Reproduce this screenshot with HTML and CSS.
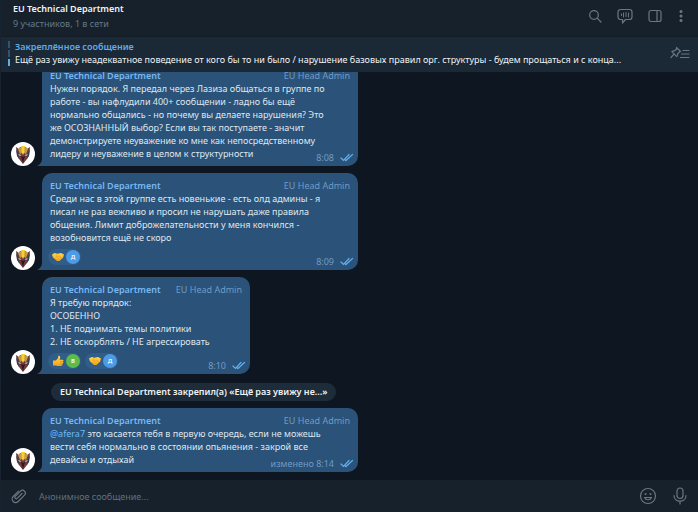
FILE: index.html
```html
<!DOCTYPE html>
<html lang="ru">
<head>
  <meta charset="UTF-8" />
  <meta name="viewport" content="width=device-width, initial-scale=1.0"/>
  <title>EU Technical Department</title>
  <link rel="stylesheet" href="styles.css">
</head>
<body>
  <!-- shared drawings -->
  <svg class="defs" aria-hidden="true">
    <defs>
      <linearGradient id="gold" x1="0" y1="0" x2="0" y2="1">
        <stop offset="0" stop-color="#ffd84a"/>
        <stop offset="1" stop-color="#f5a21c"/>
      </linearGradient>
    </defs>
    <symbol id="face" viewBox="0 0 24 24">
      <circle cx="12" cy="12" r="12" fill="#fff"/>
      <path d="M5 5l3 2 1-2h6l1 2 3-2-1 8-2 4-4 5-4-5-2-4z" fill="#6b3a40"/>
      <path d="M5 7l2 4 1 6-2-3zM19 7l-2 4-1 6 2-3z" fill="#24434a"/>
      <path d="M7 7l3-2 1 6-2 1zM14 5l3 2-2 5-2-1z" fill="#c99a44"/>
      <path d="M10 4h4l-.5 6-1.500 3-1.500-3z" fill="#f6cf35"/>
      <path d="M7 12l3 1-1 1zM17 12l-3 1 1 1z" fill="#f1e4dc"/>
      <path d="M10 14l2 1 2-1-2 7z" fill="#261c26"/>
      <path d="M8 14l2 2 1 3zM16 14l-2 2-1 3z" fill="#a32c38"/>
    </symbol>
    <symbol id="checks" viewBox="0 0 14 9">
      <path d="M1 5l2.500 2.500 5.500-6M6 7.500l6.500-6M4.800 6.300l.9 1.200" fill="none" stroke="#62b0f0" stroke-width="1.200" stroke-linecap="round"/>
    </symbol>
    <symbol id="tail" viewBox="0 0 10 10">
      <path d="M5 0v3C5 6 3 8.500 0 10h10V0z" fill="#2b5278"/>
    </symbol>
    <symbol id="handshake" viewBox="0 0 12 10">
      <path d="M0 2.500L2.500 1l3 .8L9 1l3 1.500-.8 3L7.500 9 5 9 1 5.500z" fill="url(#gold)"/>
      <path d="M5 2.200L4 4.300l1.500.5L7 3.800l3 2.500M3 6.500l1.500 1.500M6 6.500l1.500 1.500" fill="none" stroke="#d9821a" stroke-width=".4"/>
    </symbol>
    <symbol id="thumb" viewBox="0 0 12 12">
      <path d="M1 5.500h2.800L6 3.200 6.300.8C7.800.4 8.600 1.800 8.100 3.300L7.600 4.800h3c1 0 1.200 1.300.4 1.700.7.500.5 1.400-.2 1.600.4.600.1 1.400-.6 1.500.2.800-.3 1.400-1.200 1.400H5.500L3.800 10.500H1z" fill="url(#gold)"/>
      <path d="M8 6.500h3M8 8.200h2.800M7.800 9.700h2.400" stroke="#d9821a" stroke-width=".5"/>
    </symbol>
  </svg>

  <div class="app">
    <header class="topbar">
      <div class="topbar-info">
        <h1>EU Technical Department</h1>
        <p>9 участников, 1 в сети</p>
      </div>
      <div class="topbar-actions">
        <button class="icon-btn" aria-label="Поиск">
          <svg width="14" height="14" viewBox="0 0 14 14"><circle cx="6" cy="6" r="4.300"/><path d="M9.200 9.200l3.800 3.800"/></svg>
        </button>
        <button class="icon-btn" aria-label="Видеочат">
          <svg width="16" height="16" viewBox="0 0 16 16"><path d="M3.500 1.500h9a2.500 2.500 0 0 1 2.500 2.500v5a2.500 2.500 0 0 1-2.500 2.500H8.500L5.500 15v-3.500h-2A2.500 2.500 0 0 1 1 9V4a2.500 2.500 0 0 1 2.500-2.500z"/><path class="thin" d="M4.500 6v1.500M6.500 5v4M9 4.500v4M11.500 5v4"/></svg>
        </button>
        <button class="icon-btn" aria-label="Боковая панель">
          <svg width="14" height="14" viewBox="0 0 14 14"><rect x="1" y="1.500" width="12" height="11" rx="2"/><path d="M9 1.500v11"/></svg>
        </button>
        <button class="icon-btn" aria-label="Меню">
          <svg class="dots" width="8" height="14" viewBox="0 0 8 14"><circle cx="4" cy="2.500" r="1.500"/><circle cx="4" cy="7" r="1.500"/><circle cx="4" cy="11.500" r="1.500"/></svg>
        </button>
      </div>
    </header>

    <section class="pinned">
      <div class="pinned-marks"><i></i><i></i><i class="on"></i></div>
      <div class="pinned-text">
        <h2>Закреплённое сообщение</h2>
        <p>Ещё раз увижу неадекватное поведение от кого бы то ни было / нарушение базовых правил орг. структуры - будем прощаться и с конца...</p>
      </div>
      <button class="icon-btn" aria-label="Все закреплённые">
        <svg width="20" height="14" viewBox="0 0 20 14"><path d="M6.500 1.500l4 4-1 .5-2 2c.3 1.300 0 2-.7 2.700L1.800 5.700c.7-.7 1.500-1 2.700-.7l2-2zM4 8.200L1 11.500M13 4.500h6M11.500 8H19M10.500 11.500H19"/></svg>
      </button>
    </section>

    <main class="chat">
      <article class="message">
        <svg class="avatar"><use href="#face"/></svg>
        <div class="bubble">
          <svg class="tail"><use href="#tail"/></svg>
          <div class="bubble-head"><b>EU Technical Department</b><span>EU Head Admin</span></div>
          <p>Нужен порядок. Я передал через Лазиза общаться в группе по<br>работе - вы нафлудили 400+ сообщении - ладно бы ещё<br>нормально общались - но почему вы делаете нарушения? Это<br>же ОСОЗНАННЫЙ выбор? Если вы так поступаете - значит<br>демонстрируете неуважение ко мне как непосредственному<br>лидеру и неуважение в целом к структурности</p>
          <div class="meta"><time>8:08</time><svg><use href="#checks"/></svg></div>
        </div>
      </article>

      <article class="message">
        <svg class="avatar"><use href="#face"/></svg>
        <div class="bubble">
          <svg class="tail"><use href="#tail"/></svg>
          <div class="bubble-head"><b>EU Technical Department</b><span>EU Head Admin</span></div>
          <p>Среди нас в этой группе есть новенькие - есть олд админы - я<br>писал не раз вежливо и просил не нарушать даже правила<br>общения. Лимит доброжелательности у меня кончился -<br>возобновится ещё не скоро</p>
          <div class="reactions">
            <button class="reaction"><svg><use href="#handshake"/></svg><span class="who blue">Д</span></button>
          </div>
          <div class="meta"><time>8:09</time><svg><use href="#checks"/></svg></div>
        </div>
      </article>

      <article class="message">
        <svg class="avatar"><use href="#face"/></svg>
        <div class="bubble short">
          <svg class="tail"><use href="#tail"/></svg>
          <div class="bubble-head"><b>EU Technical Department</b><span>EU Head Admin</span></div>
          <p>Я требую порядок:<br>ОСОБЕННО<br>1. НЕ поднимать темы политики<br>2. НЕ оскорблять / НЕ агрессировать</p>
          <div class="reactions">
            <button class="reaction"><svg><use href="#thumb"/></svg><span class="who green">В</span></button>
            <button class="reaction"><svg><use href="#handshake"/></svg><span class="who blue">Д</span></button>
          </div>
          <div class="meta"><time>8:10</time><svg><use href="#checks"/></svg></div>
        </div>
      </article>

      <div class="service">EU Technical Department закрепил(а) «Ещё раз увижу не...»</div>

      <article class="message">
        <svg class="avatar"><use href="#face"/></svg>
        <div class="bubble">
          <svg class="tail"><use href="#tail"/></svg>
          <div class="bubble-head"><b>EU Technical Department</b><span>EU Head Admin</span></div>
          <p><a href="#afera7">@afera7</a> это касается тебя в первую очередь, если не можешь<br>вести себя нормально в состоянии опьянения - закрой все<br>девайсы и отдыхай</p>
          <div class="meta"><time>изменено 8:14</time><svg><use href="#checks"/></svg></div>
        </div>
      </article>
    </main>

    <footer class="composer">
      <button class="icon-btn" aria-label="Прикрепить">
        <svg width="16" height="16" viewBox="0 0 16 16"><path d="M11 5.500L6.200 10.300a1.300 1.300 0 0 1-1.900-1.900L9.500 3.200a2.800 2.800 0 0 1 4 4L7.200 13.500a3.400 3.400 0 0 1-5-5L7.500 3.200"/></svg>
      </button>
      <input type="text" placeholder="Анонимное сообщение..." aria-label="Анонимное сообщение">
      <button class="icon-btn" aria-label="Эмодзи">
        <svg width="18" height="18" viewBox="0 0 18 18"><circle cx="9" cy="9" r="7.500"/><path d="M5.500 10.500c1.200 3 5.800 3 7 0z"/><circle class="fill" cx="6.500" cy="7" r="1"/><circle class="fill" cx="11.500" cy="7" r="1"/></svg>
      </button>
      <button class="icon-btn" aria-label="Голосовое сообщение">
        <svg width="14" height="18" viewBox="0 0 14 18"><rect x="4" y="1" width="6" height="10.500" rx="3"/><path d="M1 8.500c0 7.500 12 7.500 12 0M7 14v3"/></svg>
      </button>
    </footer>
  </div>
</body>
</html>
```
FILE: styles.css
```css
* {
  box-sizing: border-box;
}

body {
  margin: 0;
  background: #0e1621;
  color: #dfe8f0;
  font-family: "Noto Sans", "Open Sans", sans-serif;
  font-size: 9px;
  line-height: 13px;
}

h1, h2, p {
  margin: 0;
  font-size: 9px;
}

h1, h2, b {
  font-weight: 600;
}

button {
  border: 0;
  padding: 0;
  background: none;
  font: inherit;
  cursor: pointer;
}

.defs {
  position: absolute;
  width: 0;
  height: 0;
}

.app {
  display: flex;
  flex-direction: column;
  height: 100vh;
  border-left: 1px solid #17232f;
}

.icon-btn {
  display: flex;
  flex: none;
}

.icon-btn svg {
  fill: none;
  stroke: #687782;
  stroke-width: 1.2;
  stroke-linecap: round;
  stroke-linejoin: round;
}

.icon-btn .thin {
  stroke-width: 1;
}

.icon-btn .dots,
.icon-btn .fill {
  fill: #687782;
  stroke: none;
}

/* top bar */
.topbar {
  display: flex;
  align-items: center;
  justify-content: space-between;
  height: 36px;
  padding: 0 13px 4px 12px;
  background: #17212b;
  flex: none;
}

.topbar-info {
  display: grid;
  gap: 2px;
}

.topbar h1 {
  color: #f0f3f5;
}

.topbar p {
  color: #64788a;
}

.topbar-actions {
  display: flex;
  align-items: center;
  gap: 15px;
}

/* pinned message */
.pinned {
  display: flex;
  align-items: center;
  gap: 5px;
  height: 36px;
  padding: 0 8px 3px 7px;
  background: #1b2836;
  border-top: 1px solid #131d27;
  flex: none;
}

.pinned-marks {
  display: grid;
  gap: 2px;
}

.pinned-marks i {
  width: 2px;
  height: 7px;
  background: #36536e;
}

.pinned-marks .on {
  background: #5eaee8;
}

.pinned-text {
  flex: 1;
  min-width: 0;
}

.pinned h2 {
  color: #62abe4;
}

.pinned p {
  overflow: hidden;
  white-space: nowrap;
  text-overflow: ellipsis;
  color: #f0f3f5;
}

/* messages */
.chat {
  display: flex;
  flex-direction: column;
  justify-content: flex-end;
  gap: 7px;
  flex: 1;
  min-height: 0;
  overflow: hidden;
  padding: 0 10px 8px;
}

.message {
  display: flex;
  align-items: flex-end;
  gap: 7px;
  flex: none;
}

.avatar {
  width: 24px;
  height: 24px;
  flex: none;
}

.bubble {
  position: relative;
  flex: 0 1 316px;
  padding: 6px 8px;
  background: #2b5278;
  border-radius: 10px 10px 10px 0;
}

.bubble.short {
  flex-basis: 208px;
}

.tail {
  position: absolute;
  left: -5px;
  bottom: 0;
  width: 10px;
  height: 10px;
}

.bubble-head {
  display: flex;
  justify-content: space-between;
  gap: 8px;
}

.bubble-head b {
  color: #79b8f2;
}

.bubble-head span,
.meta {
  color: #6f9bc6;
}

.bubble a {
  color: #70baf5;
  text-decoration: none;
}

.reactions {
  display: flex;
  gap: 4px;
  margin: 5px 0 -1px -2px;
}

.reaction {
  display: flex;
  align-items: center;
  gap: 2px;
  height: 16px;
  padding: 0 1px 0 4px;
  border-radius: 8px;
  background: #315d8a;
}

.reaction svg {
  width: 12px;
  height: 12px;
}

.who {
  width: 14px;
  height: 14px;
  border-radius: 50%;
  color: #fff;
  font-size: 6px;
  font-weight: 600;
  line-height: 14px;
  text-align: center;
}

.blue {
  background: #4b9be6;
}

.green {
  background: #5dbb4c;
}

.meta {
  position: absolute;
  right: 4px;
  bottom: 2px;
  display: flex;
  align-items: center;
  gap: 6px;
}

.meta svg {
  width: 14px;
  height: 9px;
}

.service {
  align-self: flex-start;
  flex: none;
  margin: 2px 0 0 40px;
  padding: 2px 9px 3px;
  border-radius: 9px;
  background: #1e2c3a;
  color: #f0f3f5;
  font-weight: 600;
}

/* composer */
.composer {
  display: flex;
  align-items: center;
  gap: 16px;
  height: 32px;
  padding: 0 11px 0 10px;
  background: #17212b;
  flex: none;
}

.composer input {
  flex: 1;
  min-width: 0;
  margin-left: -4px;
  padding: 0;
  border: 0;
  outline: 0;
  background: none;
  color: #dfe8f0;
  font: inherit;
}

.composer input::placeholder {
  color: #61707d;
}
```
